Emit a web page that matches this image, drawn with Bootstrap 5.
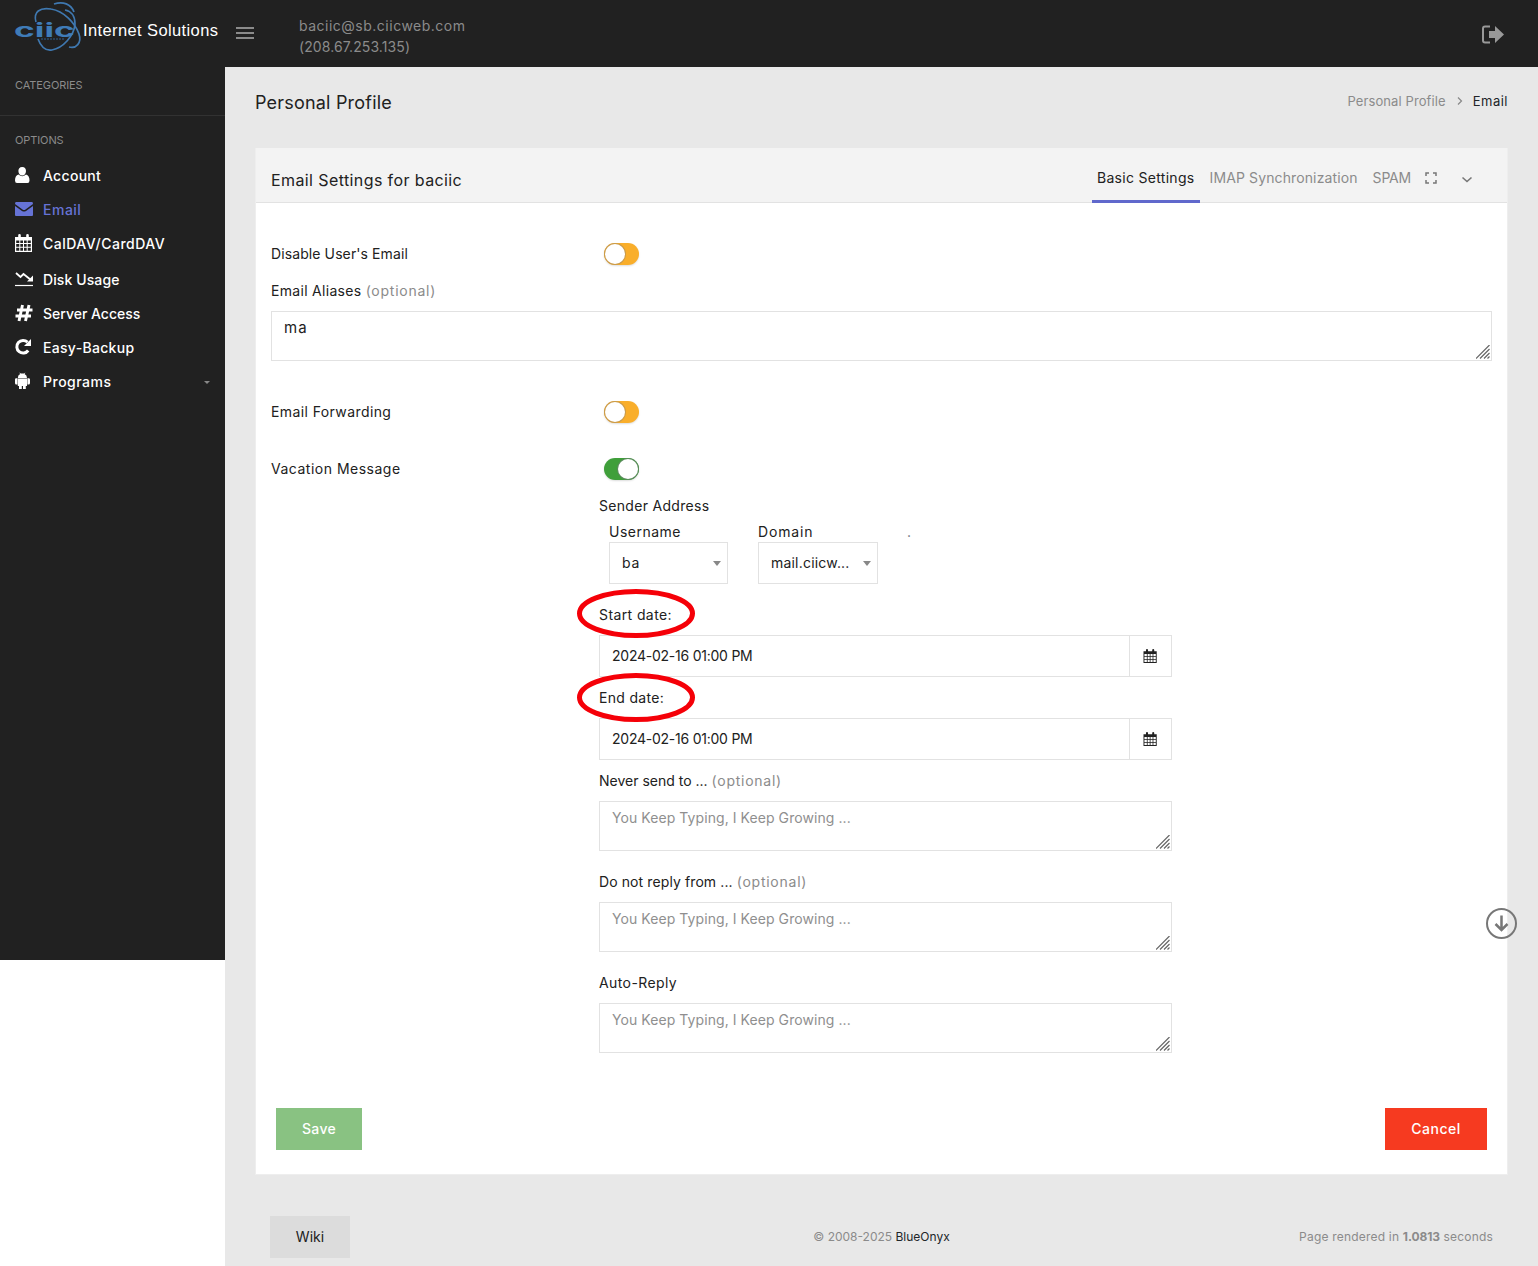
<!DOCTYPE html>
<html lang="en">
<head>
<meta charset="utf-8">
<meta name="viewport" content="width=device-width, initial-scale=1">
<title>Personal Profile - Email</title>
<link href="https://cdn.jsdelivr.net/npm/bootstrap@5.3.0/dist/css/bootstrap.min.css" rel="stylesheet">
<style>
body{font-family:Inter,"Open Sans",sans-serif;font-size:14px;line-height:20px;color:#212121;background:#fff;height:1266px;overflow:hidden}
.t1{letter-spacing:.1px}.t2{letter-spacing:.2px}.t3{letter-spacing:.3px}.t4{letter-spacing:.4px}.t5{letter-spacing:.5px}.t8{letter-spacing:.85px}
.topbar{height:67px;background:#212121;color:#8b8b8b}
.brand-box{width:225px}
.burger{margin:-2px 0 0 11px}
.host{margin-left:45px;line-height:21px;padding-top:5px}
.side{width:225px;height:893px;background:#212121;color:#fff}
.side-head{font-size:11px;color:#8b8b8b;line-height:16px;padding-left:15px;letter-spacing:-.1px}
.side .nav-link{height:34px;padding:0 15px;color:#fff;display:flex;align-items:center;font-weight:500}
.side .nav-link.active{color:#6673d6}
.side .nav-link svg{width:18px;height:18px;margin-right:10px;position:relative;top:-1px}
.side hr{margin:22px 0 16px;border-color:#666}
.page{background:#e8e8e8;padding:0 30px;height:1199px}
.page-top{height:71px;margin-bottom:10px}
.page-title{font-size:18px;line-height:24px;letter-spacing:.2px}
.crumbs{font-size:13px;color:#8b8b8b;margin-top:-3px}
.panel{border:1px solid #eee;border-top:0;border-radius:0;height:1027px;color:#212121;background:#fff}
.panel .card-header{height:55px;background:#f3f3f3;border-bottom:1px solid #e2e2e2;border-radius:0;padding:0 15px}
.panel-name{font-size:16px;padding-top:9px;letter-spacing:.4px}
.tabs{gap:5px}
.tabs .nav-link{padding:0 5px;color:#8b8b8b;height:55px;line-height:59px;white-space:nowrap}
.tabs .nav-link.active{color:#212121;border-bottom:3px solid #6068cc}
.tab-imap{letter-spacing:.12px}
.panel .card-body{padding:40px 15px 24px}
.c-label{height:20px;line-height:20px;margin-bottom:10px;white-space:nowrap}
.c-label span{color:#8b8b8b;letter-spacing:.75px}
.left-col{width:328px;flex:none}
.fields{width:573px;margin-left:328px}
.tog{width:35px;height:22px;border-radius:11px;background:#f9ae2b;margin-left:5px;display:block;padding:1px;box-shadow:0 1px 2px #ddd}
.tog i{display:block;width:20px;height:20px;border-radius:50%;background:#fff;box-shadow:0 0 0 1px #c99b4c}
.tog.on{background:#3f9f3a}
.tog.on i{margin-left:13px;box-shadow:0 0 0 1px #5b8c5c}
.area{position:relative;height:50px}
.area .form-control{height:50px;resize:none;overflow:hidden}
.area svg{position:absolute;right:2px;bottom:2px}
.form-control,.input-group-text{border:1px solid #e2e2e2;border-radius:0!important;font-size:14px;color:#212121;background-color:#fff}
.form-control{padding:6px 12px;line-height:20px}
.alias{font-size:15px;letter-spacing:1.2px}
.form-control::placeholder{color:#8f8f8f;opacity:1;letter-spacing:.07px}
.pick{height:42px;width:120px;border:1px solid #e2e2e2;padding:0 6px 0 12px}
.pick-user{width:119px}
.pick::after,.caret-s::after{content:"";border:4px solid transparent;border-top:5px solid #888;border-bottom:0}
.caret-s::after{border-width:3px 3px 0;display:block}
.datebox{height:42px}
.datebox .form-control{letter-spacing:-.24px}
.datebox .input-group-text{width:43px;padding:0 13px}
.datebox svg{margin-top:-1px}
.btn{border-radius:0;font-size:14px;height:42px;padding:0 0 2px;border:0;font-weight:500}
.btn-save,.btn-save:hover{background:#89c282;color:#fff;width:86px;margin-left:5px;letter-spacing:.3px}
.btn-stop,.btn-stop:hover{background:#f63a20;color:#fff;width:102px;margin-right:5px;letter-spacing:.5px}
.btn-wiki,.btn-wiki:hover{background:#dcdcdc;color:#212121;width:80px}
.foot{font-size:12px;color:#8b8b8b;margin-top:41px;padding:0 15px}
.foot>div{flex:1}
.ring{position:absolute;left:576px}
.scroller{position:absolute;left:1485px;top:907px}
</style>
<script src="https://cdn.jsdelivr.net/npm/bootstrap@5.3.0/dist/js/bootstrap.bundle.min.js"></script>
</head>
<body class="position-relative">
<svg width="0" height="0" class="position-absolute">
<defs>
<symbol id="cal" viewBox="0 0 18 18"><path fill="currentColor" fill-rule="evenodd" d="M0 3H3.200V1.200Q3.200 0 4.500 0T5.800 1.200V3H11.200V1.200Q11.200 0 12.500 0T13.800 1.200V3H17V18H0ZM1.200 6.500V9H4.300V6.500ZM5.300 6.500V9H8V6.500ZM9 6.500V9H11.700V6.500ZM12.700 6.500V9H15.800V6.500ZM1.200 10V12.800H4.300V10ZM5.300 10V12.800H8V10ZM9 10V12.800H11.700V10ZM12.700 10V12.800H15.800V10ZM1.200 13.800V16.800H4.300V13.800ZM5.300 13.800V16.800H8V13.800ZM9 13.800V16.800H11.700V13.800ZM12.700 13.800V16.800H15.800V13.800Z"/></symbol>
<symbol id="grip" viewBox="0 0 14 14"><path d="M0 13.500L13.500 0M4 13.500L13.500 4M8 13.500L13.500 8M11.500 13.500L13.500 11.500" stroke="#666" stroke-width="1.200" fill="none"/></symbol>
</defs>
</svg>
<header class="topbar d-flex align-items-center">
  <div class="brand-box flex-shrink-0 h-100">
    <svg width="225" height="66" viewBox="0 0 225 66">
      <g fill="none" stroke="#3f78b0" stroke-width="1.700">
        <path d="M36 22C33 12 40 7 51 9C64 11 75 23 79 34C82 43 76 49 69 47"/>
        <path d="M38 39C41 47 46 51 52 50C63 48 74 36 75 24C75 16 71 11 65 10"/>
        <path d="M54 4C63 1 71 4 74 12"/>
      </g>
      <text transform="translate(14 36.500) scale(1.600 1)" x="0" y="0" font-family="Inter,sans-serif" font-size="19" font-weight="700" fill="#3f7cb8" textLength="38" lengthAdjust="spacingAndGlyphs">ciic</text>
      <path d="M41 39H64" stroke="#315f8d" stroke-width="1" stroke-dasharray="2 1"/>
      <text x="83" y="36" font-family="Liberation Sans,sans-serif" font-size="16.500" fill="#fff" textLength="135">Internet Solutions</text>
    </svg>
  </div>
  <svg class="burger" width="18" height="14" viewBox="0 0 18 14"><path d="M0 2H18M0 7H18M0 12H18" stroke="#8b8b8b" stroke-width="1.800"/></svg>
  <div class="host"><div class="t5">baciic@sb.ciicweb.com</div><div class="t1">(208.67.253.135)</div></div>
  <svg class="ms-auto me-4" width="32" height="20" viewBox="0 0 32 20"><path d="M8 2H3Q1 2 1 4V16Q1 18 3 18H8" transform="translate(0 .5)" fill="none" stroke="#999" stroke-width="2"/><path d="M7 7H13V2L22 10.500L13 19V14H7Z" fill="#999"/></svg>
</header>
<div class="d-flex">
<aside class="side flex-shrink-0">
  <div class="side-head" style="padding-top:10px">CATEGORIES</div>
  <hr>
  <div class="side-head" style="margin-bottom:11px">OPTIONS</div>
  <nav class="nav flex-column flex-nowrap">
    <a class="nav-link t3" href="#"><svg viewBox="0 0 18 18"><path fill="currentColor" d="M7.200 1C10 1 11 3 11 5C11 7.500 9.500 9.500 7.200 9.500S3.400 7.500 3.400 5C3.400 3 4.500 1 7.200 1ZM3.500 8.500Q7.200 12 11 8.500Q14.500 9.500 14.500 14.500Q14.500 17 12.500 17H2Q0 17 0 14.500Q0 9.500 3.500 8.500Z"/></svg>Account</a>
    <a class="nav-link active t5" href="#"><svg viewBox="0 0 18 18"><path fill="currentColor" d="M1 2H17Q18 2 18 4L10.500 9.500Q9 10.500 7.500 9.500L0 4Q0 2 1 2ZM0 6L7 11Q9 12.200 11 11L18 6V15Q18 16 17 16H1Q0 16 0 15Z"/></svg>Email</a>
    <a class="nav-link t5" href="#"><svg viewBox="0 0 18 18"><use href="#cal"/></svg>CalDAV/CardDAV</a>
    <a class="nav-link t1" href="#" style="margin-top:2px"><svg viewBox="0 0 18 18"><path fill="none" stroke="currentColor" stroke-width="1.800" d="M1 3L5.500 7L8.500 4L16 10"/><path fill="currentColor" d="M18 5.500V11.500H12Z"/><path d="M0 15.500H18" stroke="currentColor" stroke-width="1.200"/></svg>Disk Usage</a>
    <a class="nav-link" href="#"><svg viewBox="0 0 18 18"><path fill="none" stroke="currentColor" stroke-width="2.900" d="M7.500 1L4 17M14 1L10.500 17M2 6H17.500M.5 12H16"/></svg>Server Access</a>
    <a class="nav-link t3" href="#"><svg viewBox="0 0 18 18"><path fill="none" stroke="currentColor" stroke-width="3" d="M12.500 4.200A6.300 6.300 0 1 0 13.200 12.500"/><path fill="currentColor" d="M16 1V8H9Z"/></svg>Easy-Backup</a>
    <a class="nav-link t5" href="#"><svg viewBox="0 0 18 18"><path fill="currentColor" d="M2.800 6Q2.800 3 5.200 2L4.200 .5L5.900 1.600Q7.300 1.200 8.900 1.600L10.500 .5L9.500 2Q12 3 12 6ZM2.800 6.500H12V14H10.800V17H8V14H6.800V17H4V14H2.800ZM0 7.500Q0 6.300 1.200 6.300H2.400V12.500H1.200Q0 12.500 0 11ZM12.400 6.300H13.600Q15 6.300 15 7.500V11Q15 12.500 13.600 12.500H12.400Z"/></svg>Programs<span class="caret-s ms-auto"></span></a>
  </nav>
</aside>
<main class="page flex-grow-1">
  <div class="page-top d-flex justify-content-between align-items-center">
    <h1 class="page-title fw-normal mb-0">Personal Profile</h1>
    <div class="crumbs d-flex align-items-center"><span class="t1">Personal Profile</span><svg class="mx-2" width="11" height="10" viewBox="0 0 11 10"><path d="M4 1.500L7.500 5L4 8.500" fill="none" stroke="#888" stroke-width="1.200"/></svg><span class="text-dark t5">Email</span></div>
  </div>
  <section class="card panel">
    <div class="card-header d-flex justify-content-between">
      <div class="panel-name d-flex align-items-center">Email Settings for baciic</div>
      <nav class="nav tabs flex-nowrap align-items-start">
        <a class="nav-link active t3" href="#">Basic Settings</a>
        <a class="nav-link tab-imap" href="#">IMAP Synchronization</a>
        <a class="nav-link" href="#" style="letter-spacing:-.2px">SPAM</a>
        <svg style="margin:24px 0 0 4px" width="12" height="12" viewBox="0 0 12 12"><path d="M4 1H1V4M8 1H11V4M11 8V11H8M4 11H1V8" fill="none" stroke="#777" stroke-width="1.500"/></svg>
        <svg style="margin:25px 19px 0 19px" width="12" height="12" viewBox="0 0 12 12"><path d="M1.500 4.500L6 8.500L10.500 4.500" fill="none" stroke="#777" stroke-width="1.600"/></svg>
      </nav>
    </div>
    <div class="card-body">
      <div class="d-flex align-items-center"><div class="left-col t1">Disable User's Email</div><span class="tog"><i></i></span></div>
      <div class="c-label t3" style="margin-top:16px">Email Aliases <span>(optional)</span></div>
      <div class="area"><textarea class="form-control alias">ma</textarea><svg width="14" height="14"><use href="#grip"/></svg></div>
      <div class="d-flex align-items-center" style="margin-top:40px"><div class="left-col t4">Email Forwarding</div><span class="tog"><i></i></span></div>
      <div class="d-flex align-items-center" style="margin-top:35px"><div class="left-col t5">Vacation Message</div><span class="tog on"><i></i></span></div>
      <div class="fields">
        <div class="c-label t3" style="margin-top:16px;margin-bottom:6px">Sender Address</div>
        <div class="d-flex" style="padding-left:10px;gap:30px">
          <div><div class="c-label mb-0 t5">Username</div><div class="pick pick-user d-flex justify-content-between align-items-center t8">ba</div></div>
          <div><div class="c-label mb-0 t8">Domain</div><div class="pick d-flex justify-content-between align-items-center t2">mail.ciicw...</div></div>
          <div class="c-label text-secondary" style="margin-left:-1px">.</div>
        </div>
        <div class="c-label t4" style="margin-top:21px">Start date:</div>
        <div class="input-group datebox"><input class="form-control" value="2024-02-16 01:00 PM"><span class="input-group-text"><svg width="15" height="14"><use href="#cal"/></svg></span></div>
        <div class="c-label t3" style="margin-top:11px">End date:</div>
        <div class="input-group datebox"><input class="form-control" value="2024-02-16 01:00 PM"><span class="input-group-text"><svg width="15" height="14"><use href="#cal"/></svg></span></div>
        <div class="c-label" style="margin-top:11px">Never send to ... <span>(optional)</span></div>
        <div class="area"><textarea class="form-control" placeholder="You Keep Typing, I Keep Growing ..."></textarea><svg width="14" height="14"><use href="#grip"/></svg></div>
        <div class="c-label t1" style="margin-top:21px">Do not reply from ... <span>(optional)</span></div>
        <div class="area"><textarea class="form-control" placeholder="You Keep Typing, I Keep Growing ..."></textarea><svg width="14" height="14"><use href="#grip"/></svg></div>
        <div class="c-label t4" style="margin-top:21px">Auto-Reply</div>
        <div class="area"><textarea class="form-control" placeholder="You Keep Typing, I Keep Growing ..."></textarea><svg width="14" height="14"><use href="#grip"/></svg></div>
      </div>
      <div class="d-flex justify-content-between" style="margin-top:55px"><button class="btn btn-save">Save</button><button class="btn btn-stop">Cancel</button></div>
    </div>
  </section>
  <footer class="foot d-flex align-items-center">
    <div><button class="btn btn-wiki fw-normal">Wiki</button></div>
    <div class="text-center">© 2008-2025 <span class="text-dark">BlueOnyx</span></div>
    <div class="text-end t2">Page rendered in <b style="letter-spacing:-.1px">1.0813</b> seconds</div>
  </footer>
</main>
</div>
<svg class="ring" style="top:588px" width="120" height="51"><ellipse cx="60" cy="25.500" rx="56.500" ry="22" fill="none" stroke="#f50008" stroke-width="5"/></svg>
<svg class="ring" style="top:672px" width="120" height="51"><ellipse cx="60" cy="25.500" rx="56.500" ry="22" fill="none" stroke="#f50008" stroke-width="5"/></svg>
<svg class="scroller" width="33" height="33" viewBox="0 0 33 33"><circle cx="16.500" cy="16.500" r="14.500" fill="none" stroke="#777" stroke-width="2"/><path d="M16.500 8.500V23M10.500 17L16.500 23L22.500 17" fill="none" stroke="#777" stroke-width="2.500"/></svg>
</body>
</html>
